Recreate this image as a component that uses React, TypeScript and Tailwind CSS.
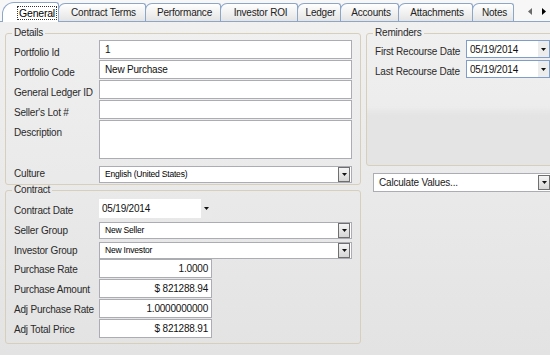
import type { ReactNode } from "react";

const tabs = [
  { label: "Contract Terms", w: "w-[88px]" },
  { label: "Performance", w: "w-[76px]" },
  { label: "Investor ROI", w: "w-[78px]" },
  { label: "Ledger", w: "w-[44px]" },
  { label: "Accounts", w: "w-[59px]" },
  { label: "Attachments", w: "w-[75px]" },
  { label: "Notes", w: "w-[42px]" },
];

function Caret({ color = "#111" }: { color?: string }) {
  return (
    <svg width="5" height="3" viewBox="0 0 5 3">
      <path d="M0 0h5L2.5 3z" fill={color} />
    </svg>
  );
}

function DropButton() {
  return (
    <div className="ml-auto mr-px flex h-[15px] w-[12px] shrink-0 items-center justify-center border border-[#6f6f6f] bg-gradient-to-b from-[#f5f5f5] to-[#d6d6d6]">
      <Caret />
    </div>
  );
}

function TextBox({
  value,
  className = "",
  right,
}: {
  value?: string;
  className?: string;
  right?: boolean;
}) {
  return (
    <div
      className={`flex items-center border border-[#abadb3] bg-white text-[10px] tracking-[-0.2px] text-[#111] ${
        right ? "justify-end pr-[3px]" : "pl-[5px]"
      } ${className}`}
    >
      {value}
    </div>
  );
}

function Combo({ value, className = "" }: { value: string; className?: string }) {
  return (
    <div
      className={`flex items-center whitespace-nowrap border border-[#abadb3] bg-white pl-[5px] text-[8.5px] text-black ${className}`}
    >
      <span>{value}</span>
      <DropButton />
    </div>
  );
}

function Row({
  label,
  pt,
  mt = "",
  children,
}: {
  label: string;
  pt: string;
  mt?: string;
  children: ReactNode;
}) {
  return (
    <div className={`flex items-start ${mt}`}>
      <div className={`w-[85px] shrink-0 leading-[12px] ${pt}`}>{label}</div>
      {children}
    </div>
  );
}

function DateBox({ className = "" }: { className?: string }) {
  return (
    <div
      className={`flex h-[18px] items-center border border-[#7f9dc9] bg-white pl-[3px] text-[10px] tracking-[-0.2px] text-[#111] ${className}`}
    >
      <span>05/19/2014</span>
      <div className="ml-auto flex h-full w-[11px] items-center justify-center bg-[#ececec]">
        <Caret />
      </div>
    </div>
  );
}

export default function App() {
  return (
    <div className="relative h-[355px] w-[550px] overflow-hidden bg-gradient-to-b from-[#f1f1f1] to-[#e3e3e3] font-['Liberation_Sans',Arial,sans-serif] text-[10px] tracking-[-0.2px] text-[#2a2a2a]">
      {/* tab strip */}
      <div className="flex h-[22px] items-end border-b border-[#8da6c8] bg-[#f7f7f7]">
        <div className="relative z-10 -mb-px ml-[2px] flex h-[20px] w-[57px] items-center justify-end rounded-tl-[12px] rounded-tr-[3px] border border-b-0 border-[#8da6c8] bg-white pr-[2px]">
          <span className="px-[1px] text-[10.5px] leading-[12px] text-black outline-1 outline-dotted outline-[#333]">
            General
          </span>
        </div>
        {tabs.map((t) => (
          <div
            key={t.label}
            className={`-ml-px flex h-[18px] items-center justify-center rounded-tl-[7px] rounded-tr-[3px] border border-b-0 border-[#8da6c8] bg-gradient-to-b from-white to-[#e4e4e4] pl-[3px] text-[#222] ${t.w}`}
          >
            {t.label}
          </div>
        ))}
        <div className="ml-auto mr-[4px] flex h-[20px] items-center gap-[10px]">
          <svg width="4" height="7" viewBox="0 0 4 7">
            <path d="M4 0v7L0 3.5z" fill="#6a6a6a" />
          </svg>
          <svg width="4" height="7" viewBox="0 0 4 7">
            <path d="M0 0v7l4-3.5z" fill="#000" />
          </svg>
        </div>
      </div>

      <div className="flex">
        {/* left column */}
        <div className="ml-[5px] w-[356px] shrink-0">
          <fieldset className="mt-[5px] rounded-[3px] border border-[#d7cfba] px-[8px] pb-[1px] pt-px">
            <legend className="-ml-[2px] px-[2px] leading-[12px]">Details</legend>
            <div className="flex flex-col gap-px">
              <Row label="Portfolio Id" pt="pt-[7px]">
                <TextBox value="1" className="h-[19px] flex-1" />
              </Row>
              <Row label="Portfolio Code" pt="pt-[7px]">
                <TextBox value="New Purchase" className="h-[19px] flex-1" />
              </Row>
              <Row label="General Ledger ID" pt="pt-[7px]">
                <TextBox className="h-[19px] flex-1" />
              </Row>
              <Row label="Seller's Lot #" pt="pt-[7px]">
                <TextBox className="h-[19px] flex-1" />
              </Row>
              <Row label="Description" pt="pt-[7px]">
                <TextBox className="h-[39px] flex-1" />
              </Row>
              <Row label="Culture" pt="pt-[2px]" mt="mt-[6px]">
                <Combo value="English (United States)" className="h-[17px] flex-1" />
              </Row>
            </div>
          </fieldset>

          <fieldset className="rounded-[3px] border border-[#d7cfba] px-[8px] pb-[5px] pt-[4px]">
            <legend className="-ml-[2px] px-[2px] leading-[10px]">Contract</legend>
            <Row label="Contract Date" pt="pt-[6px]">
              <div className="flex h-[19px] w-[113px] items-center bg-white pl-[3px] text-[10px] text-[#111]">
                <span>05/19/2014</span>
                <div className="ml-auto flex h-full w-[11px] items-center justify-center bg-[#e9e9e9]">
                  <Caret />
                </div>
              </div>
            </Row>
            <Row label="Seller Group" pt="pt-[3px]" mt="mt-[4px]">
              <Combo value="New Seller" className="h-[17px] flex-1" />
            </Row>
            <Row label="Investor Group" pt="pt-[3px]" mt="mt-[3px]">
              <Combo value="New Investor" className="h-[17px] flex-1" />
            </Row>
            <Row label="Purchase Rate" pt="pt-[5px]">
              <TextBox value="1.0000" right className="h-[19px] w-[113px]" />
            </Row>
            <Row label="Purchase Amount" pt="pt-[5px]" mt="mt-px">
              <TextBox value="$ 821288.94" right className="h-[19px] w-[113px]" />
            </Row>
            <Row label="Adj Purchase Rate" pt="pt-[5px]" mt="mt-px">
              <TextBox value="1.0000000000" right className="h-[19px] w-[113px]" />
            </Row>
            <Row label="Adj Total Price" pt="pt-[5px]" mt="mt-px">
              <TextBox value="$ 821288.91" right className="h-[19px] w-[113px]" />
            </Row>
          </fieldset>
        </div>

        {/* right column */}
        <div className="ml-[5px] w-[200px] shrink-0">
          <fieldset className="mt-[5px] h-[139px] rounded-[3px] border border-[#d7cfba] bg-gradient-to-b from-transparent from-[55%] to-[#e4e4e4] to-[62%] px-[8px] pt-px">
            <legend className="-ml-[2px] px-[2px] leading-[12px]">Reminders</legend>
            <div className="flex items-start">
              <div className="w-[91px] shrink-0 whitespace-nowrap pt-[6px] leading-[12px]">First Recourse Date</div>
              <DateBox className="w-[84px]" />
            </div>
            <div className="mt-[2px] flex items-start">
              <div className="w-[91px] shrink-0 whitespace-nowrap pt-[6px] leading-[12px]">Last Recourse Date</div>
              <DateBox className="w-[84px]" />
            </div>
          </fieldset>
          <div className="ml-[7px] mt-[7px] flex h-[19px] w-[178px] items-center whitespace-nowrap border border-[#abadb3] bg-white pl-[5px] text-[10px] text-[#222]">
            <span>Calculate Values...</span>
            <div className="ml-auto flex h-[15px] w-[12px] items-center justify-center border border-[#6f6f6f] bg-gradient-to-b from-[#f5f5f5] to-[#d6d6d6]">
              <Caret />
            </div>
          </div>
        </div>
      </div>
    </div>
  );
}
